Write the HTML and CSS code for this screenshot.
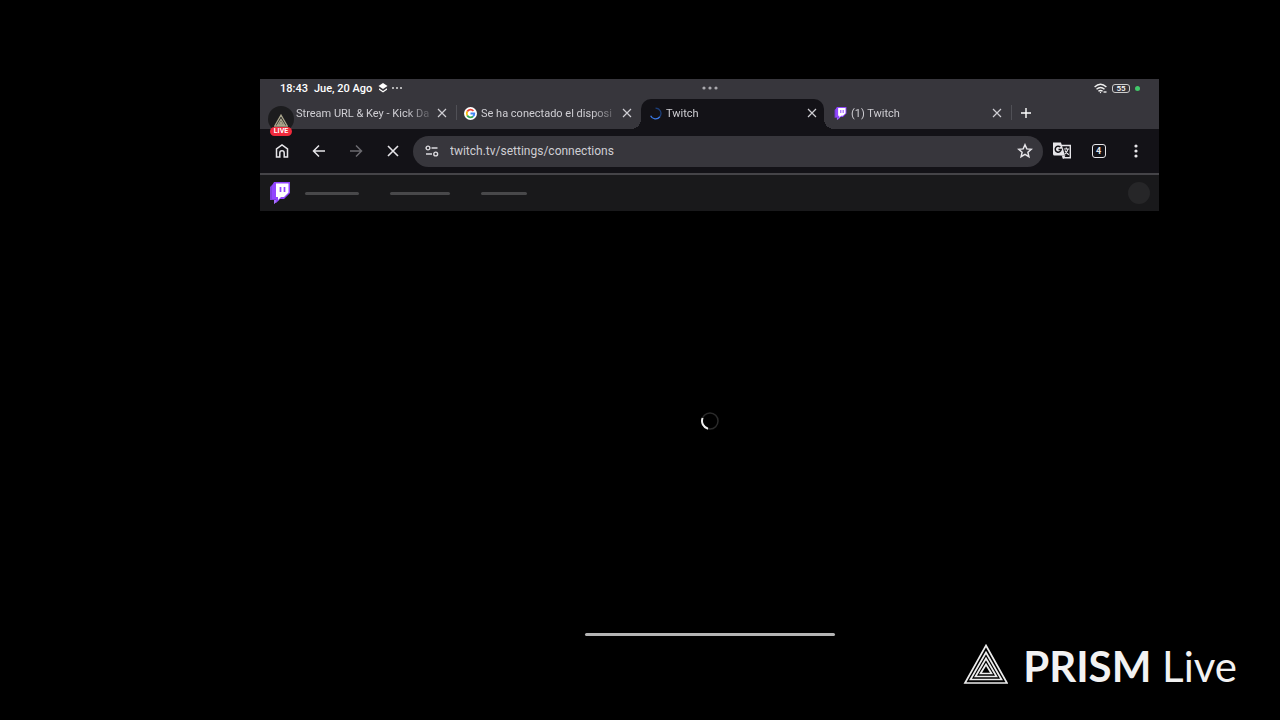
FILE: index.html
```html
<!DOCTYPE html>
<html lang="es">
<head>
    <meta charset="UTF-8">
    <meta name="viewport" content="width=device-width, initial-scale=1.0">
    <title>Twitch</title>
    <link rel="stylesheet" href="styles.css">
</head>
<body>
    <svg class="defs" aria-hidden="true">
        <symbol id="close" viewBox="0 0 12 12">
            <path d="M2 2l8 8M10 2l-8 8" fill="none" stroke="currentColor" stroke-width="1.2"/>
        </symbol>
        <symbol id="twitch" viewBox="0 0 20 22">
            <path d="M0 5L4 1h4v17l-4 4v-4H0z" fill="#7c3fe0"/>
            <path d="M4 18h5l-5 4z" fill="#a970ff"/>
            <path d="M4 0h16v11l-6 6h-4l-4 4v-4H2V4z" fill="#9146ff"/>
            <path d="M6 1.500h12.500v9L14 15h-3l-3 3v-3H6z" fill="#fff"/>
            <path d="M10.500 5v5M14.500 5v5" stroke="#9146ff" stroke-width="1.700"/>
        </symbol>
    </svg>

    <div class="device">
        <div class="status-bar">
            <div class="status-left">
                <span>18:43</span>
                <span>Jue, 20 Ago</span>
                <svg width="10" height="10" viewBox="0 0 10 10"><path d="M5 0l4.500 3L5 6 .5 3z" fill="#fff"/><path d="M1 5.200L5 8l4-2.800v1.600L5 9.600 1 6.800z" fill="#fff"/></svg>
                <svg class="more" width="10" height="10" viewBox="0 0 10 10" fill="#ddd"><circle cx="1" cy="5" r="1"/><circle cx="5" cy="5" r="1"/><circle cx="9" cy="5" r="1"/></svg>
            </div>
            <svg width="16" height="6" viewBox="0 0 16 6" fill="#aaa9ae"><circle cx="2" cy="3" r="1.600"/><circle cx="8" cy="3" r="1.600"/><circle cx="14" cy="3" r="1.600"/></svg>
            <div class="status-right">
                <svg width="13" height="11" viewBox="0 0 13 11" fill="none" stroke="#eee" stroke-width="1.400"><path d="M.6 4Q6.500-1.500 12.400 4M2.500 6.200Q6.500 2.600 10.500 6.200M4.400 8.300Q6.500 6.500 8.600 8.300"/><circle cx="6.500" cy="9.500" r=".7" fill="#eee" stroke="none"/><path d="M9.500 9h3"/></svg>
                <span class="battery">55</span>
                <span class="privacy-dot"></span>
            </div>
        </div>

        <div class="tab-strip">
            <div class="tab">
                <span class="tab-icon"></span>
                <a class="tab-title" href="#">Stream URL &amp; Key - Kick Da</a>
                <button class="tab-close" aria-label="Cerrar"><svg width="12" height="12"><use href="#close"/></svg></button>
            </div>
            <div class="tab divided">
                <svg class="tab-icon" viewBox="0 0 12 12"><circle cx="6" cy="6" r="6" fill="#fff"/><g fill="none" stroke-width="1.700"><path d="M8.700 3.700A3.500 3.500 0 0 0 3 4.200" stroke="#ea4335"/><path d="M3 4.200a3.500 3.500 0 0 0 0 3.600" stroke="#fbbc05"/><path d="M3 7.800a3.500 3.500 0 0 0 5.400.9" stroke="#34a853"/><path d="M8.400 8.700A3.500 3.500 0 0 0 9.500 6H6" stroke="#4285f4"/></g></svg>
                <a class="tab-title" href="#">Se ha conectado el disposi</a>
                <button class="tab-close" aria-label="Cerrar"><svg width="12" height="12"><use href="#close"/></svg></button>
            </div>
            <div class="tab active">
                <svg class="tab-icon" viewBox="0 0 12 12" fill="none" stroke-width="1.200"><path d="M6 1a5 5 0 0 1 4 8" stroke="#1d3e78"/><path d="M10 9A5 5 0 0 1 1.500 8" stroke="#3b7bea"/></svg>
                <a class="tab-title" href="#">Twitch</a>
                <button class="tab-close" aria-label="Cerrar"><svg width="12" height="12"><use href="#close"/></svg></button>
            </div>
            <div class="tab">
                <svg class="tab-icon"><use href="#twitch"/></svg>
                <a class="tab-title" href="#">(1) Twitch</a>
                <button class="tab-close" aria-label="Cerrar"><svg width="12" height="12"><use href="#close"/></svg></button>
            </div>
            <button class="new-tab" aria-label="Nueva pestaña"><svg width="12" height="12" viewBox="0 0 12 12"><path d="M6 1v10M1 6h10" stroke="currentColor" stroke-width="1.400"/></svg></button>
            <div class="live-bubble">
                <svg width="14" height="13" viewBox="0 0 44 40" fill="none" stroke="#a9a58b" stroke-width="4"><path d="M22 3L42 38H2zM22 16l11 18H11z"/><path d="M22 24l4 7h-8z"/></svg>
                <span class="live-label">LIVE</span>
            </div>
        </div>

        <div class="toolbar">
            <button aria-label="Inicio"><svg width="16" height="16" viewBox="0 0 16 16" fill="none" stroke="currentColor" stroke-width="1.500"><path d="M2.500 14V6L8 2l5.500 4v8h-3.300V10a2.200 2.200 0 0 0-4.400 0v4z"/></svg></button>
            <button aria-label="Atrás"><svg width="16" height="16" viewBox="0 0 16 16" fill="none" stroke="currentColor" stroke-width="1.500"><path d="M14 8H2.500M8 2.500L2.500 8 8 13.500"/></svg></button>
            <button class="disabled" aria-label="Adelante"><svg width="16" height="16" viewBox="0 0 16 16" fill="none" stroke="currentColor" stroke-width="1.500"><path d="M2 8h11.500M8 2.500L13.500 8 8 13.500"/></svg></button>
            <button aria-label="Detener"><svg width="16" height="16" viewBox="0 0 16 16" stroke="currentColor" stroke-width="1.600"><path d="M3 3l10 10M13 3L3 13"/></svg></button>
            <div class="address-bar">
                <svg width="14" height="12" viewBox="0 0 14 12" fill="none" stroke="#dddce0" stroke-width="1.400"><circle cx="3" cy="3" r="1.900"/><path d="M6.500 3H12.500M1 9h6"/><circle cx="10.700" cy="9" r="1.900"/></svg>
                <input type="text" aria-label="Dirección" value="twitch.tv/settings/connections">
                <button class="star" aria-label="Favorito"><svg width="16" height="16" viewBox="0 0 16 16" fill="none" stroke="currentColor" stroke-width="1.500"><path d="M8 1.800l1.800 4.100 4.500.4-3.400 3 1 4.400L8 11.400l-3.900 2.300 1-4.400-3.400-3 4.500-.4z"/></svg></button>
            </div>
            <button aria-label="Traducir">
                <svg width="18" height="18" viewBox="0 0 18 18"><path d="M8 3.500h9.300v12.300H9.500" fill="none" stroke="#e6e5e9" stroke-width="1.400"/><path d="M0 .5h8l4 13H1.500Q0 13.500 0 12z" fill="#e6e5e9"/><path d="M12.500 13.500h-4l2 3.500z" fill="#e6e5e9"/><path d="M7.300 5A3 3 0 1 0 8.200 7.500H5.500" fill="none" stroke="#131217" stroke-width="1.500"/><path d="M10.800 7h5.300M13.300 5.500V7M15 7c-.5 2.500-1.800 4-3.200 5M12 8.500c.6 1.500 2 3 3.800 4.200" fill="none" stroke="#e6e5e9" stroke-width="1.200"/></svg>
            </button>
            <button aria-label="Pestañas"><span class="tab-count">4</span></button>
            <button aria-label="Menú"><svg width="16" height="16" viewBox="0 0 16 16" fill="currentColor"><circle cx="8" cy="3" r="1.600"/><circle cx="8" cy="8" r="1.600"/><circle cx="8" cy="13" r="1.600"/></svg></button>
        </div>

        <header class="site-header">
            <a href="#" aria-label="Twitch"><svg width="20" height="22"><use href="#twitch"/></svg></a>
            <span class="placeholder medium"></span>
            <span class="placeholder large"></span>
            <span class="placeholder small"></span>
            <span class="avatar"></span>
        </header>

        <main class="page">
            <svg width="18" height="18" viewBox="0 0 18 18" fill="none"><circle cx="9" cy="9" r="8" stroke="#2b2b2b" stroke-width="1.500"/><path d="M1.600 6A8 8 0 0 0 7 16.700" stroke="#efefef" stroke-width="2"/></svg>
        </main>
        <div class="home-bar"></div>
    </div>

    <div class="watermark">
        <svg width="46" height="44" viewBox="0 0 46 44" fill="none" stroke="#ececec" stroke-width="1.700"><path d="M24 4.500L45 42H3z"/><path d="M24 11.500L39.500 38.500h-31z"/><path d="M24 17.500L34.500 35.500h-21z"/><path d="M24 23.500l5.500 9h-11z"/></svg>
        <span><b>PRISM</b> Live</span>
    </div>
</body>
</html>
```

FILE: styles.css
```css
* {
    box-sizing: border-box;
}

body {
    margin: 0;
    min-height: 100vh;
    padding: 79px 121px 84px 260px;
    display: flex;
    background-color: #000;
    color: #e6e5e9;
    font-family: Roboto, "Liberation Sans", sans-serif;
}

button {
    display: flex;
    align-items: center;
    justify-content: center;
    padding: 0;
    border: none;
    background: none;
    color: inherit;
    font: inherit;
    cursor: pointer;
}

svg {
    display: block;
    flex-shrink: 0;
}

.defs {
    position: absolute;
    width: 0;
    height: 0;
}

.device {
    flex: 1;
    min-width: 0;
    display: flex;
    flex-direction: column;
}

/* Status bar */
.status-bar {
    display: grid;
    grid-template-columns: 1fr auto 1fr;
    align-items: center;
    height: 20px;
    padding: 0 19px 2px 20px;
    background-color: #37363c;
    color: #fff;
    font-size: 11px;
    font-weight: 500;
}

.status-left,
.status-right {
    display: flex;
    align-items: center;
    gap: 6px;
}

.status-left .more {
    margin-left: -2px;
}

.status-right {
    justify-content: flex-end;
    gap: 5px;
}

.battery {
    width: 18px;
    height: 9px;
    border: 1px solid #ccc;
    border-radius: 3px;
    font-size: 8px;
    line-height: 7px;
    text-align: center;
}

.privacy-dot {
    width: 5px;
    height: 5px;
    border-radius: 50%;
    background-color: #42c86a;
}

/* Tabs */
.tab-strip {
    position: relative;
    display: flex;
    height: 30px;
    padding-left: 11px;
    background-color: #37363c;
}

.tab {
    position: relative;
    flex: 0 1 185px;
    min-width: 0;
    display: flex;
    align-items: center;
    padding: 0 8px 2px;
    color: #cfced3;
    font-size: 11px;
}

.tab.divided::before,
.new-tab::before {
    content: '';
    position: absolute;
    left: 0;
    top: 6px;
    width: 1px;
    height: 15px;
    background-color: #505056;
}

.tab.active {
    flex-basis: 183px;
    margin-right: 2px;
    padding-right: 6px;
    border-radius: 10px 10px 0 0;
    background-color: #131217;
}

.tab.active::before,
.tab.active::after {
    content: '';
    position: absolute;
    bottom: 0;
    width: 10px;
    height: 10px;
}

.tab.active::before {
    right: 100%;
    background: radial-gradient(circle at 0 0, transparent 10px, #131217 10px);
}

.tab.active::after {
    left: 100%;
    background: radial-gradient(circle at 100% 0, transparent 10px, #131217 10px);
}

.tab-icon {
    flex-shrink: 0;
    width: 13px;
    height: 13px;
}

.tab-title {
    flex: 1;
    margin: 0 0 0 4px;
    white-space: nowrap;
    color: inherit;
    text-decoration: none;
    -webkit-mask-image: linear-gradient(to right, #000 110px, transparent 140px);
    mask-image: linear-gradient(to right, #000 110px, transparent 140px);
}

.new-tab {
    position: relative;
    width: 30px;
    padding-bottom: 2px;
    color: #fff;
}

.live-bubble {
    position: absolute;
    left: 8px;
    top: 7px;
    width: 26px;
    height: 26px;
    padding-top: 8px;
    display: flex;
    flex-direction: column;
    align-items: center;
    border-radius: 50%;
    background-color: #1c1c1e;
}

.live-label {
    width: 22px;
    flex-shrink: 0;
    border-radius: 5px;
    background-color: #f02a3c;
    color: #fff;
    font-size: 7px;
    font-weight: 700;
    line-height: 9px;
    text-align: center;
}

/* Toolbar */
.toolbar {
    display: flex;
    align-items: center;
    height: 46px;
    padding: 0 5px 0 3px;
    border-bottom: 2px solid #454448;
    background-color: #131217;
}

.toolbar button {
    flex-shrink: 0;
    width: 37px;
    height: 37px;
}

.toolbar .disabled {
    color: #6b6a6f;
}

.address-bar {
    flex: 1;
    min-width: 0;
    height: 31px;
    margin-left: 2px;
    padding-left: 12px;
    display: flex;
    align-items: center;
    gap: 11px;
    border-radius: 16px;
    background-color: #37363c;
}

.address-bar input {
    flex: 1;
    min-width: 0;
    padding: 0;
    border: none;
    outline: none;
    background: none;
    color: #cfced3;
    font: 12px Roboto, "Liberation Sans", sans-serif;
}

.tab-count {
    width: 14px;
    height: 14px;
    border: 1px solid #e6e5e9;
    border-radius: 3px;
    font-size: 9px;
    font-weight: 700;
    line-height: 12px;
}

/* Twitch page */
.site-header {
    display: flex;
    align-items: center;
    height: 36px;
    padding: 0 9px 0 10px;
    background-color: #19191b;
}

.placeholder {
    height: 3px;
    border-radius: 2px;
    background-color: #48484a;
}

.placeholder.medium {
    width: 54px;
    margin-left: 15px;
}

.placeholder.large {
    width: 60px;
    margin-left: 31px;
}

.placeholder.small {
    width: 46px;
    margin-left: 31px;
}

.avatar {
    width: 22px;
    height: 22px;
    margin-left: auto;
    border-radius: 50%;
    background-color: #262628;
}

.page {
    flex: 1;
    display: flex;
    align-items: center;
    justify-content: center;
    padding-bottom: 3px;
}

.home-bar {
    width: 250px;
    height: 3px;
    align-self: center;
    border-radius: 2px;
    background-color: #b4b4b4;
}

.watermark {
    position: absolute;
    right: 43px;
    bottom: 29px;
    display: flex;
    align-items: flex-start;
    gap: 15px;
    color: #f2f2f2;
    font-family: Lato, sans-serif;
    font-size: 42px;
    line-height: 50px;
}
```
